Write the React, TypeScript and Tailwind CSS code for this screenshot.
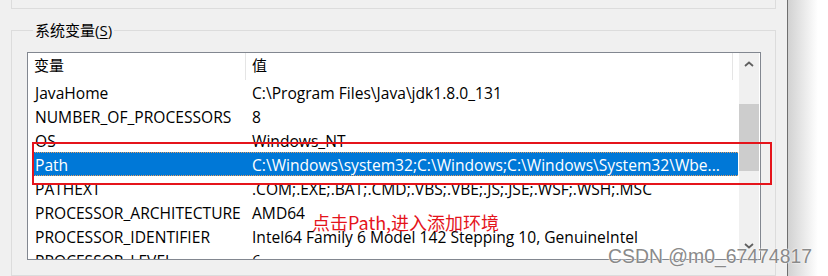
import React from "react";

const ROWS: { name: string; value: string; selected?: boolean }[] = [
  { name: "JavaHome", value: "C:\\Program Files\\Java\\jdk1.8.0_131" },
  { name: "NUMBER_OF_PROCESSORS", value: "8" },
  { name: "OS", value: "Windows_NT" },
  { name: "Path", value: "C:\\Windows\\system32;C:\\Windows;C:\\Windows\\System32\\Wbe...", selected: true },
  { name: "PATHEXT", value: ".COM;.EXE;.BAT;.CMD;.VBS;.VBE;.JS;.JSE;.WSF;.WSH;.MSC" },
  { name: "PROCESSOR_ARCHITECTURE", value: "AMD64" },
  { name: "PROCESSOR_IDENTIFIER", value: "Intel64 Family 6 Model 142 Stepping 10, GenuineIntel" },
  { name: "PROCESSOR_LEVEL", value: "6" },
];

const Chevron: React.FC<{ down?: boolean }> = ({ down }) => (
  <svg width="10" height="6" viewBox="0 0 10 6" className={down ? "rotate-180" : ""}>
    <path d="M1 5 L5 1.5 L9 5" fill="none" stroke="#606060" strokeWidth="1.8" />
  </svg>
);

export default function App() {
  return (
    <div className="relative w-[828px] h-[276px] overflow-hidden bg-white flex font-['Open_Sans','Noto_Sans_CJK_SC',sans-serif] text-[15.6px] text-black">
      {/* dialog */}
      <div className="w-[788px] h-full bg-[#f0f0f0] border-r border-[#6f6f6f] px-[11px] flex flex-col shrink-0">
        {/* bottom of the user variables group */}
        <div className="h-[9px] border-x border-b border-[#dcdcdc] shrink-0" />

        <fieldset className="mt-[11px] border border-[#dcdcdc] pl-[15px] pr-[14px] pt-[12px] flex-1 min-w-0">
          <legend className="ml-[6px] px-[2px] leading-[20px] text-[15px]">
            系统变量(<span className="underline underline-offset-2">S</span>)
          </legend>

          {/* list view */}
          <div className="h-[208px] border border-[#828790] bg-white flex overflow-hidden">
            <div className="flex-1 flex flex-col min-w-0">
              {/* header */}
              <div className="h-[27px] flex shrink-0 text-[15px]">
                <div className="w-[218px] border-r border-[#e5e5e5] pl-[6px] pb-[2px] flex items-center">变量</div>
                <div className="w-[487px] border-r border-[#e5e5e5] pl-[6px] pb-[2px] flex items-center">值</div>
              </div>
              {ROWS.map((r) => (
                <div
                  key={r.name}
                  className={
                    "ml-[5px] mr-[1px] h-[24px] shrink-0 flex items-center whitespace-nowrap pt-[3px] " +
                    (r.selected ? "bg-[#0078d7] text-white border-y border-dotted border-[#e9a060]" : "")
                  }
                >
                  <div className="w-[217px] pl-[2px] shrink-0">{r.name}</div>
                  <div className="pl-[2px] truncate">{r.value}</div>
                </div>
              ))}
            </div>

            {/* scrollbar */}
            <div className="w-[20px] mr-[1px] bg-[#f0f0f0] flex flex-col shrink-0">
              <div className="h-[22px] flex items-center justify-center shrink-0">
                <Chevron />
              </div>
              <div className="mt-[29px] h-[67px] bg-[#cdcdcd] shrink-0" />
              <div className="flex-1" />
              <div className="h-[24px] flex items-center justify-center shrink-0 pb-[2px]">
                <Chevron down />
              </div>
            </div>
          </div>
        </fieldset>
      </div>

      {/* window shadow */}
      <div className="w-[30px] h-full bg-gradient-to-r from-[#d2d2d2] to-white shrink-0" />

      {/* annotations */}
      <div className="absolute left-[32px] top-[142px] w-[740px] h-[43px] border-[2px] border-[#e5141b]" />
      <div className="absolute left-[312px] top-[213px] leading-none text-[18px] text-[#e5141b] font-['Noto_Sans_CJK_SC',sans-serif] whitespace-nowrap">
        点击Path,进入添加环境
      </div>
      <div className="absolute left-[608px] top-[247px] leading-none text-[19.4px] text-[#8a8a8a] font-['Liberation_Sans',sans-serif] whitespace-nowrap [text-shadow:0_0_2px_#fff,0_0_1px_#fff]">
        CSDN @m0_67474817
      </div>
    </div>
  );
}
